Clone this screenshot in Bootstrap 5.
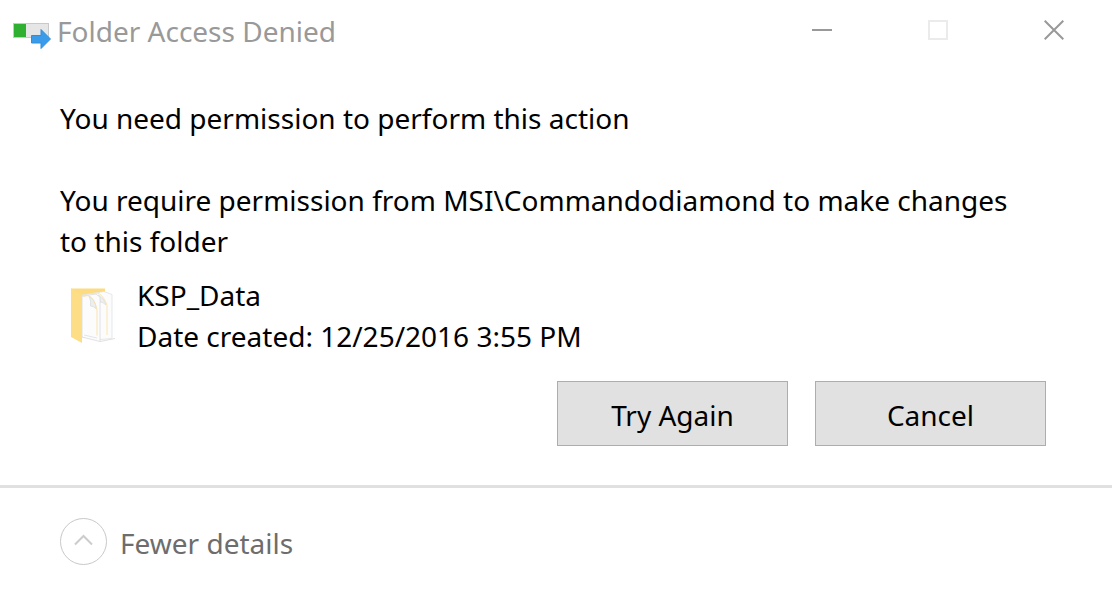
<!DOCTYPE html>
<html lang="en">
<head>
<meta charset="utf-8">
<meta name="viewport" content="width=device-width, initial-scale=1">
<title>Folder Access Denied</title>
<link href="https://cdn.jsdelivr.net/npm/bootstrap@5.3.0/dist/css/bootstrap.min.css" rel="stylesheet">
<style>
  body { font-family: "Noto Sans", "Open Sans", sans-serif; font-size: 28px; line-height: 41px; color: #000; background: #fff; }
  .titlebar { padding: 10px 38px 0 12px; color: #999; }
  .titlebar h1 { font-size: 28px; line-height: 41px; font-weight: 400; margin: 1px 0 0; }
  .app-icon { margin-right: 5px; }
  .win-btn { width: 40px; height: 40px; padding: 0; border: 0; background: none; display: flex; align-items: center; justify-content: center; }
  .controls { gap: 76px; }
  .message { padding: 46px 66px 39px 60px; }
  .message p { margin-bottom: 41px; }
  .message .ask { margin-bottom: 13px; padding-right: 24px; }
  .item-text { padding-left: 17px; }
  .actions { gap: 27px; margin-top: 24px; }
  .dialog-btn { width: 231px; height: 65px; padding: 4px 0 0; font-size: 28px; line-height: 41px;
    --bs-btn-color: #000; --bs-btn-bg: #e1e1e1; --bs-btn-border-color: #adadad;
    --bs-btn-hover-bg: #e5f1fb; --bs-btn-hover-border-color: #0078d7; }
  .details { border-top: 3px solid #e0e0e0; padding: 30px 60px; }
  .details button { border: 0; background: none; padding: 0; gap: 13px; color: #6d6d6d; }
  .details button span { padding-top: 4px; }
</style>
</head>
<body>
<main>
  <header class="titlebar d-flex align-items-start">
    <svg class="app-icon flex-shrink-0" width="40" height="41" viewBox="0 0 40 41" aria-hidden="true">
      <rect x="1.5" y="13.5" width="35" height="14" fill="#e6e6e6" stroke="#c9c9c9"/>
      <rect x="2" y="14" width="12" height="13" fill="#30b030"/>
      <path d="M19.5 25.500h9.500v-6l9.500 9.500-9.500 9.500v-5.500h-9.500z" fill="#3a9bea" stroke="#2f8fdc"/>
    </svg>
    <h1 class="flex-grow-1">Folder Access Denied</h1>
    <div class="controls d-flex">
      <button type="button" class="win-btn" aria-label="Minimize"><svg width="20" height="20"><path d="M0 10h20" stroke="#999" stroke-width="2"/></svg></button>
      <button type="button" class="win-btn" aria-label="Maximize" disabled><svg width="20" height="20"><rect x="1" y="1" width="18" height="18" fill="none" stroke="#ebebeb" stroke-width="2"/></svg></button>
      <button type="button" class="win-btn" aria-label="Close"><svg width="20" height="20"><path d="M.7.7l18.600 18.600M19.300.7L.7 19.300" stroke="#999" stroke-width="2"/></svg></button>
    </div>
  </header>

  <section class="message">
    <p>You need permission to perform this action</p>
    <p class="ask">You require permission from MSI\Commandodiamond to make changes to this folder</p>
    <div class="d-flex">
      <svg class="flex-shrink-0" width="60" height="80" viewBox="0 0 60 80" aria-hidden="true">
        <path d="M40 66l15-3v1l-15 3z" fill="#e0e0e0"/>
        <path d="M11 13.500h34v49H22z" fill="#fddb80"/>
        <path d="M22 20l22-3.500 8 3V63.500l-12 1z" fill="#fcfcfd" stroke="#dfe1e3" stroke-width=".8"/>
        <path d="M38 20q6 2 8 10-3-3-6-3z" fill="#eceef0" stroke="#d6d8da" stroke-width=".6"/>
        <path d="M32 18.500l5-.5q6 1 10 12v30" fill="none" stroke="#fae4ad" stroke-width=".9"/>
        <path d="M22 21l14-2 4 3v44.500L22 62z" fill="#fcfcfd" stroke="#d9dbdd" stroke-width=".8"/>
        <path d="M29 21q6 3 7.500 13-3-3-6-3 1-5-1.500-10z" fill="#eceef0" stroke="#d3d5d7" stroke-width=".6"/>
        <path d="M23 21.500l5-1q6 2 9 14v26" fill="none" stroke="#fae1a5" stroke-width=".9"/>
        <path d="M24 60l13 3" stroke="#dcdedf" stroke-width=".8"/>
        <path d="M11 13.500l11 6V68l-11-6z" fill="#fddd85"/>
      </svg>
      <div class="item-text">
        <div>KSP_Data</div>
        <div>Date created: 12/25/2016 3:55 PM</div>
      </div>
    </div>
    <div class="actions d-flex justify-content-end">
      <button type="button" class="btn dialog-btn rounded-0">Try Again</button>
      <button type="button" class="btn dialog-btn rounded-0">Cancel</button>
    </div>
  </section>

  <footer class="details">
    <button type="button" class="d-flex align-items-center" aria-expanded="true">
      <svg width="47" height="47" aria-hidden="true"><circle cx="23.500" cy="23.500" r="23" fill="#fff" stroke="#c8c8c8"/><path d="M15 26.500l8.500-8.500 8.500 8.500" fill="none" stroke="#ccc" stroke-width="2"/></svg>
      <span>Fewer details</span>
    </button>
  </footer>
</main>
<script src="https://cdn.jsdelivr.net/npm/bootstrap@5.3.0/dist/js/bootstrap.bundle.min.js"></script>
</body>
</html>
